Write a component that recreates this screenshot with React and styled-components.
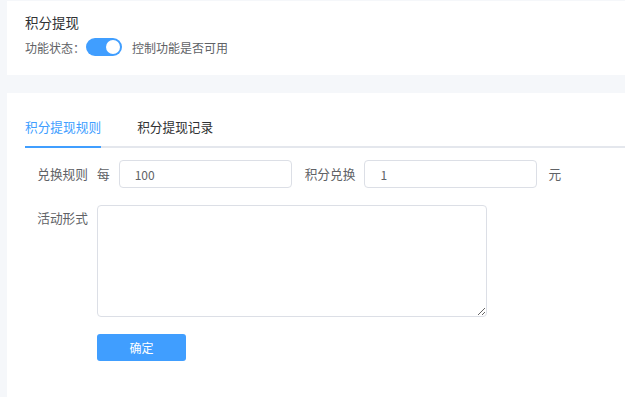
import React, { useState } from 'react'
import styled, { createGlobalStyle } from 'styled-components'

const GlobalStyle = createGlobalStyle`
  body {
    margin: 0;
    background: #f5f7fa;
    font-family: "Noto Sans CJK SC", "Noto Sans", sans-serif;
  }
`

const Page = styled.div`
  padding: 1px 0 0 7px;
  display: flex;
  flex-direction: column;
  gap: 18px;
  height: 397px;
  box-sizing: border-box;
`

const Card = styled.div`
  background: #fff;
  padding: ${p => p.$pad};
  box-sizing: border-box;
  flex: ${p => (p.$grow ? 1 : 'none')};
  height: ${p => p.$h || 'auto'};
`

const Title = styled.div`
  font-size: 13.5px;
  line-height: 20px;
  color: #303133;
`

const StatusRow = styled.div`
  display: flex;
  align-items: center;
  margin-top: 6px;
  height: 18px;
  font-size: 12px;
  color: #606266;
`

const Switch = styled.button`
  width: 36px;
  height: 18px;
  border: none;
  border-radius: 9px;
  background: ${p => (p.$on ? '#409eff' : '#dcdfe6')};
  margin: 0 10px 0 1px;
  padding: 0;
  position: relative;
  cursor: pointer;
  &::after {
    content: '';
    position: absolute;
    top: 2px;
    left: ${p => (p.$on ? '20px' : '2px')};
    width: 14px;
    height: 14px;
    border-radius: 50%;
    background: #fff;
  }
`

const Tabs = styled.div`
  display: flex;
  gap: 36px;
  height: 39px;
  border-bottom: 2px solid #e4e7ed;
  margin-bottom: 12px;
`

const Tab = styled.div`
  font-size: 12.7px;
  line-height: 40px;
  color: ${p => (p.$active ? '#409eff' : '#303133')};
  border-bottom: 2px solid ${p => (p.$active ? '#409eff' : 'transparent')};
  margin-bottom: -2px;
  cursor: pointer;
`

const FormRow = styled.div`
  display: flex;
  align-items: ${p => (p.$top ? 'flex-start' : 'center')};
  margin-bottom: ${p => p.$mb};
  font-size: 12.7px;
  color: #606266;
`

const Label = styled.label`
  width: 63px;
  padding-right: 9px;
  text-align: right;
  line-height: 28px;
  flex: none;
  margin-top: ${p => (p.$top ? '-1px' : '0')};
`

const Text = styled.span`
  margin: ${p => p.$m};
  line-height: 28px;
`

const Input = styled.input`
  width: 173px;
  height: 28px;
  box-sizing: border-box;
  border: 1px solid #dcdfe6;
  border-radius: 4px;
  padding: 0 15px;
  font-size: 12px;
  color: #606266;
  font-family: inherit;
  outline: none;
`

const TextArea = styled.textarea`
  width: 390px;
  height: 112px;
  box-sizing: border-box;
  border: 1px solid #dcdfe6;
  border-radius: 4px;
  padding: 5px 15px;
  font-family: inherit;
  font-size: 12px;
  resize: vertical;
  outline: none;
  display: block;
`

const Button = styled.button`
  margin-left: 72px;
  width: 89px;
  height: 27px;
  border: none;
  border-radius: 3px;
  background: #409eff;
  color: #fff;
  font-size: 12px;
  font-family: inherit;
  cursor: pointer;
`

export default function App() {
  const [on, setOn] = useState(true)
  const [tab, setTab] = useState(0)
  const tabs = ['积分提现规则', '积分提现记录']

  return (
    <>
      <GlobalStyle />
      <Page>
        <Card $pad="11px 18px" $h="74px">
          <Title>积分提现</Title>
          <StatusRow>
            <span>功能状态：</span>
            <Switch $on={on} onClick={() => setOn(!on)} />
            <span>控制功能是否可用</span>
          </StatusRow>
        </Card>
        <Card $pad="14px 0 0 18px" $grow>
          <Tabs>
            {tabs.map((t, i) => (
              <Tab key={t} $active={tab === i} onClick={() => setTab(i)}>{t}</Tab>
            ))}
          </Tabs>
          <FormRow $mb="17px">
            <Label>兑换规则</Label>
            <Text $m="0 9px 0 0">每</Text>
            <Input defaultValue="100" />
            <Text $m="0 9px 0 13px">积分兑换</Text>
            <Input defaultValue="1" />
            <Text $m="0 0 0 11px">元</Text>
          </FormRow>
          <FormRow $top $mb="17px">
            <Label $top>活动形式</Label>
            <TextArea />
          </FormRow>
          <Button>确定</Button>
        </Card>
      </Page>
    </>
  )
}
